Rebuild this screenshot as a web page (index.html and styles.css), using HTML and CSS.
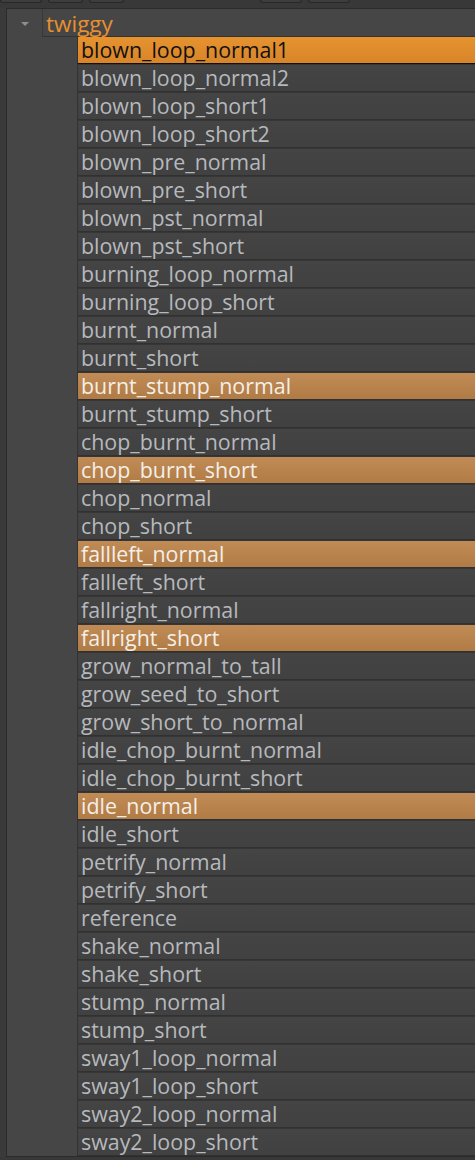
FILE: index.html
```html
<!DOCTYPE html>
<html>
<head>
<meta charset="utf-8">
<link rel="stylesheet" href="styles.css">
</head>
<body>
<div class="topbar">
  <span class="tab tab-a"></span>
  <span class="tab tab-b"></span>
  <span class="tab tab-b"></span>
  <span class="tab tab-c"></span>
  <span class="tab tab-a"></span>
</div>
<div class="frame">
  <div class="gutter"></div>
  <div class="panel">
    <div class="group">
      <div class="toggle"><span class="arrow"></span></div>
      <div class="group-title">twiggy</div>
    </div>
    <ul class="clips">
      <li class="clip selected">blown_loop_normal1</li>
      <li class="clip">blown_loop_normal2</li>
      <li class="clip">blown_loop_short1</li>
      <li class="clip">blown_loop_short2</li>
      <li class="clip">blown_pre_normal</li>
      <li class="clip">blown_pre_short</li>
      <li class="clip">blown_pst_normal</li>
      <li class="clip">blown_pst_short</li>
      <li class="clip">burning_loop_normal</li>
      <li class="clip">burning_loop_short</li>
      <li class="clip">burnt_normal</li>
      <li class="clip">burnt_short</li>
      <li class="clip marked">burnt_stump_normal</li>
      <li class="clip">burnt_stump_short</li>
      <li class="clip">chop_burnt_normal</li>
      <li class="clip marked">chop_burnt_short</li>
      <li class="clip">chop_normal</li>
      <li class="clip">chop_short</li>
      <li class="clip marked">fallleft_normal</li>
      <li class="clip">fallleft_short</li>
      <li class="clip">fallright_normal</li>
      <li class="clip marked">fallright_short</li>
      <li class="clip">grow_normal_to_tall</li>
      <li class="clip">grow_seed_to_short</li>
      <li class="clip">grow_short_to_normal</li>
      <li class="clip">idle_chop_burnt_normal</li>
      <li class="clip">idle_chop_burnt_short</li>
      <li class="clip marked">idle_normal</li>
      <li class="clip">idle_short</li>
      <li class="clip">petrify_normal</li>
      <li class="clip">petrify_short</li>
      <li class="clip">reference</li>
      <li class="clip">shake_normal</li>
      <li class="clip">shake_short</li>
      <li class="clip">stump_normal</li>
      <li class="clip">stump_short</li>
      <li class="clip">sway1_loop_normal</li>
      <li class="clip">sway1_loop_short</li>
      <li class="clip">sway2_loop_normal</li>
      <li class="clip">sway2_loop_short</li>
    </ul>
  </div>
</div>
</body>
</html>
```
FILE: styles.css
```css
html, body {
  margin: 0;
  padding: 0;
}
body {
  width: 475px;
  height: 1160px;
  overflow: hidden;
  background: #383838;
  font-family: "Open Sans", "Noto Sans", sans-serif;
}
.topbar {
  height: 8px;
  display: flex;
  align-items: flex-start;
  gap: 6px;
  background: #383838;
}
.tab {
  display: block;
  height: 2px;
  background: #3d3d3d;
  border: 1px solid #282828;
  border-top: none;
  border-radius: 0 0 4px 4px;
}
.tab-a { width: 40px; }
.tab-b { width: 33px; }
.tab-c { width: 40px; margin-left: 130px; }
.frame {
  display: flex;
}
.gutter {
  width: 6px;
  background: #3a3a3a;
  border-right: 1px solid #2b2b2b;
}
.panel {
  flex: 1;
  background: #464646;
  border-top: 1px solid #2b2b2b;
  border-bottom: 1px solid #2b2b2b;
}
.group {
  display: flex;
  height: 28px;
}
.toggle {
  width: 35px;
  display: flex;
  justify-content: center;
  align-items: center;
}
.arrow {
  width: 0;
  height: 0;
  border-left: 4px solid transparent;
  border-right: 4px solid transparent;
  border-top: 4px solid #8e8e8e;
  margin-top: 1px;
}
.group-title {
  flex: 1;
  box-sizing: border-box;
  border-left: 1px solid #383838;
  border-bottom: 1px solid #333333;
  padding-left: 3px;
  color: #e8902e;
  font-size: 22.5px;
  line-height: 29px;
}
.clips {
  list-style: none;
  margin: -1px 0 0 70px;
  padding: 0;
  background: #424242;
}
.clip {
  box-sizing: border-box;
  height: 28px;
  border-top: 1px solid #363636;
  border-bottom: 1px solid #313131;
  border-left: 1px solid #333333;
  background: linear-gradient(#444444, #414141);
  padding-left: 3px;
  color: #b6b9bd;
  font-size: 21.4px;
  line-height: 26px;
  white-space: nowrap;
  overflow: hidden;
}
.clip.selected {
  border-top-color: #111111;
  border-bottom-color: #111111;
  background: linear-gradient(#e6922f, #d8852a);
  color: #111111;
}
.clip.marked {
  background: linear-gradient(#c08b55, #b17b46);
  color: #f3efe8;
}
```
